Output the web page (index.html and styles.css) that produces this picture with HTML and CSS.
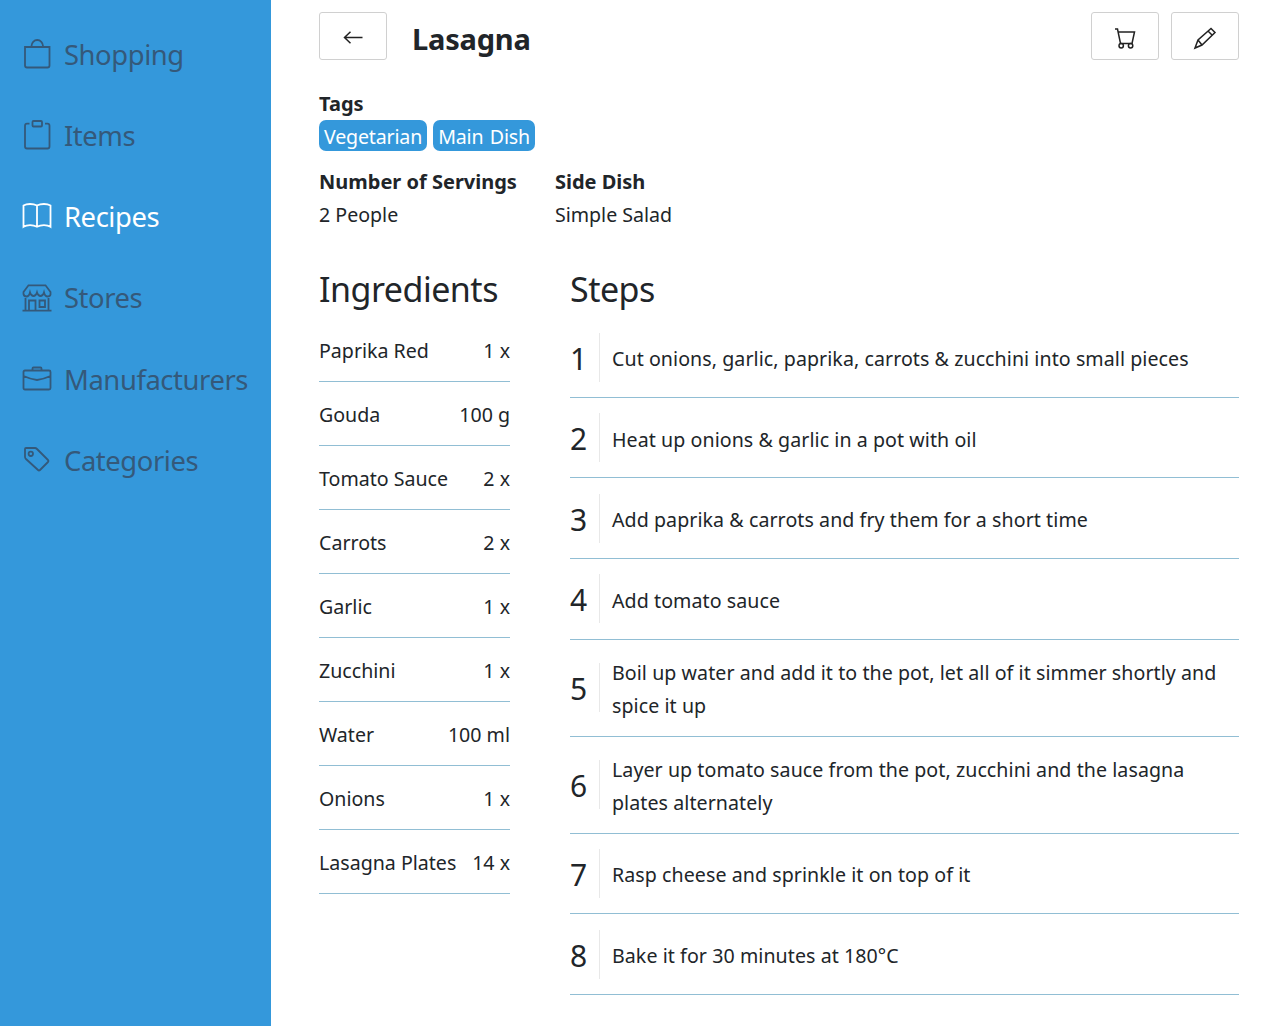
FILE: index.html
```html
<!DOCTYPE html>
<html lang="en">
<head>
<meta charset="utf-8">
<title>Lasagna</title>
<link rel="stylesheet" href="styles.css">
</head>
<body>
<nav class="sidebar">
  <a class="nav-item"><svg class="icon" viewBox="0 0 30 32"><path d="M3 9h24.500v18.500q0 2-2 2H5q-2 0-2-2zM9.500 9V8a5.750 6 0 0 1 11.500 0v1"/></svg><span>Shopping</span></a>
  <a class="nav-item"><svg class="icon" viewBox="0 0 30 32"><path d="M7.500 4.700H5q-2 0-2 2v20.800q0 2 2 2h20.500q2 0 2-2V6.700q0-2-2-2h-2.500M10.500 3q0-1 1-1h7.500q1 0 1 1v3.500q0 1-1 1h-7.500q-1 0-1-1z"/></svg><span>Items</span></a>
  <a class="nav-item active"><svg class="icon" viewBox="0 0 30 32"><path d="M15 5.500v21.300M1.500 5.500C5 3.500 11 3.500 15 5.500C19 3.500 25 3.500 28.500 5.500V26.800C25 24.500 19 24.500 15 26.800C11 24.500 5 24.500 1.500 26.800z"/></svg><span>Recipes</span></a>
  <a class="nav-item"><svg class="icon" viewBox="0 0 30 32"><path d="M6.500 4.300h17l5 6.700v2.500q-.5 2-3 2t-3.500-4q-1 3.500-3.500 3.500t-3.500-3.500q-1 3.500-3.500 3.500t-3.500-3.500q-1 4-3.500 4t-3-2.500v-2zM3.500 17v12.500M26.500 17v12.500M0.500 29.700h29M7 29.500V19.500h6.500v10M17.500 19.500h5.500v6.500h-5.500z"/></svg><span>Stores</span></a>
  <a class="nav-item"><svg class="icon" viewBox="0 0 30 32"><path d="M3 7.500h24q1.500 0 1.500 1.500v16q0 1.500-1.500 1.500h-24Q1.500 26.500 1.500 25V9q0-1.500 1.500-1.500zM10.500 7V5.500q0-1 1-1h7q1 0 1 1V7M1.500 13q6.500 3 13.500 4 7-1 13.500-4"/></svg><span>Manufacturers</span></a>
  <a class="nav-item"><svg class="icon" viewBox="0 0 30 32"><path d="M3 5q0-1 1-1h9q1 0 2 1l11 11q1 1 0 2l-8 8q-1 1-2 0L4 15q-1-1-1-2z"/><circle cx="8.800" cy="9.800" r="2.200"/></svg><span>Categories</span></a>
</nav>
<main class="recipe">
  <header class="toolbar">
    <button class="button" aria-label="Back"><svg class="glyph" viewBox="0 0 24 24"><path d="M21.500 11.500H3.500M9.500 5.800L3.500 11.500l6 5.700"/></svg></button>
    <h1 class="title">Lasagna</h1>
    <button class="button" aria-label="Add to shopping"><svg class="glyph" viewBox="0 0 24 24"><path d="M2 3h2.500L7.500 17.500h11.500L21.500 6H5"/><circle cx="8.200" cy="19.800" r="2.200"/><circle cx="17.600" cy="19.800" r="2.200"/></svg></button>
    <button class="button" aria-label="Edit"><svg class="glyph" viewBox="0 0 24 24"><path d="M2 22l3-8L18 2.500l4 4L9 19zM5 14l4 5M15 5l4 4"/></svg></button>
  </header>
  <section class="tags">
    <h2 class="label">Tags</h2>
    <div class="tag-list"><span class="tag">Vegetarian</span><span class="tag">Main Dish</span></div>
  </section>
  <section class="facts">
    <div><h2 class="label">Number of Servings</h2><span>2 People</span></div>
    <div><h2 class="label">Side Dish</h2><span>Simple Salad</span></div>
  </section>
  <div class="columns">
    <section class="ingredients">
      <h2 class="heading">Ingredients</h2>
      <ul class="list">
        <li class="ingredient"><span>Paprika Red</span><span>1 x</span></li>
        <li class="ingredient"><span>Gouda</span><span>100 g</span></li>
        <li class="ingredient"><span>Tomato Sauce</span><span>2 x</span></li>
        <li class="ingredient"><span>Carrots</span><span>2 x</span></li>
        <li class="ingredient"><span>Garlic</span><span>1 x</span></li>
        <li class="ingredient"><span>Zucchini</span><span>1 x</span></li>
        <li class="ingredient"><span>Water</span><span>100 ml</span></li>
        <li class="ingredient"><span>Onions</span><span>1 x</span></li>
        <li class="ingredient"><span>Lasagna Plates</span><span>14 x</span></li>
      </ul>
    </section>
    <section class="steps">
      <h2 class="heading">Steps</h2>
      <ol class="list">
        <li class="step"><b class="number">1</b><span class="text">Cut onions, garlic, paprika, carrots &amp; zucchini into small pieces</span></li>
        <li class="step"><b class="number">2</b><span class="text">Heat up onions &amp; garlic in a pot with oil</span></li>
        <li class="step"><b class="number">3</b><span class="text">Add paprika &amp; carrots and fry them for a short time</span></li>
        <li class="step"><b class="number">4</b><span class="text">Add tomato sauce</span></li>
        <li class="step"><b class="number">5</b><span class="text">Boil up water and add it to the pot, let all of it simmer shortly and spice it up</span></li>
        <li class="step"><b class="number">6</b><span class="text">Layer up tomato sauce from the pot, zucchini and the lasagna plates alternately</span></li>
        <li class="step"><b class="number">7</b><span class="text">Rasp cheese and sprinkle it on top of it</span></li>
        <li class="step"><b class="number">8</b><span class="text">Bake it for 30 minutes at 180°C</span></li>
      </ol>
    </section>
  </div>
</main>
</body>
</html>
```
FILE: styles.css
```css
* { box-sizing: border-box; }
body {
  margin: 0;
  display: flex;
  min-height: 1026px;
  background: #fff;
  color: #212529;
  font: 19.6px/33px "Noto Sans", sans-serif;
}
h1, h2, ul, ol { margin: 0; padding: 0; }
.sidebar {
  flex: 0 0 271px;
  padding: 13.7px 0 0 22px;
  background: #3498db;
}
.nav-item {
  display: flex;
  align-items: center;
  gap: 12px;
  height: 81.2px;
  color: #34597a;
  font-size: 27.4px;
  letter-spacing: -0.42px;
}
.nav-item.active { color: #fff; }
.icon, .glyph { fill: none; stroke: currentColor; }
.icon { width: 30px; height: 32px; margin-bottom: 1px; stroke-width: 1.8; }
.recipe { flex: 1; padding: 12px 32px 0 48px; }
.toolbar { display: flex; gap: 12px; }
.button {
  display: grid;
  place-items: center;
  width: 68px;
  height: 48px;
  padding: 3px 0 0;
  border: 1px solid #d0d0d0;
  border-radius: 3px;
  background: #fff;
  color: #222;
}
.glyph { width: 24px; height: 24px; stroke-width: 1.5; }
.title {
  flex: 1;
  padding-left: 13px;
  font-size: 29px;
  line-height: 54px;
  letter-spacing: -0.2px;
}
.tags { padding-top: 22px; }
.label { font-size: 20px; line-height: 32px; font-weight: 700; }
.tag-list { display: flex; gap: 6px; }
.tag {
  height: 31px;
  padding: 0 5px;
  border-radius: 7px;
  background: #3498db;
  color: #fff;
  letter-spacing: -0.17px;
  word-spacing: 1.5px;
}
.facts { display: flex; gap: 38px; padding-top: 15px; }
.columns { display: flex; gap: 60px; padding-top: 33px; }
.ingredients { flex: 0 0 191px; }
.steps { flex: 1; }
.heading {
  margin-bottom: 3px;
  font-size: 34px;
  line-height: 50px;
  font-weight: 400;
  letter-spacing: -0.5px;
}
.list { list-style: none; }
.ingredients .list { padding-top: 1px; }
.steps .list { padding-top: 0.3px; }
.ingredient {
  display: flex;
  justify-content: space-between;
  height: 64px;
  padding-top: 16px;
  border-bottom: 1px solid #91bed4;
}
.step {
  display: flex;
  align-items: center;
  min-height: 80.6px;
  padding: 15px 0;
  border-bottom: 1px solid #91bed4;
}
.number {
  flex: 0 0 30px;
  margin-right: 12px;
  padding-top: 3px;
  border-right: 1px solid #e8e8e8;
  font-size: 30px;
  line-height: 46px;
  font-weight: 400;
}
.text {
  margin: 1.5px 0 -1.5px;
  letter-spacing: 0.07px;
}
```
